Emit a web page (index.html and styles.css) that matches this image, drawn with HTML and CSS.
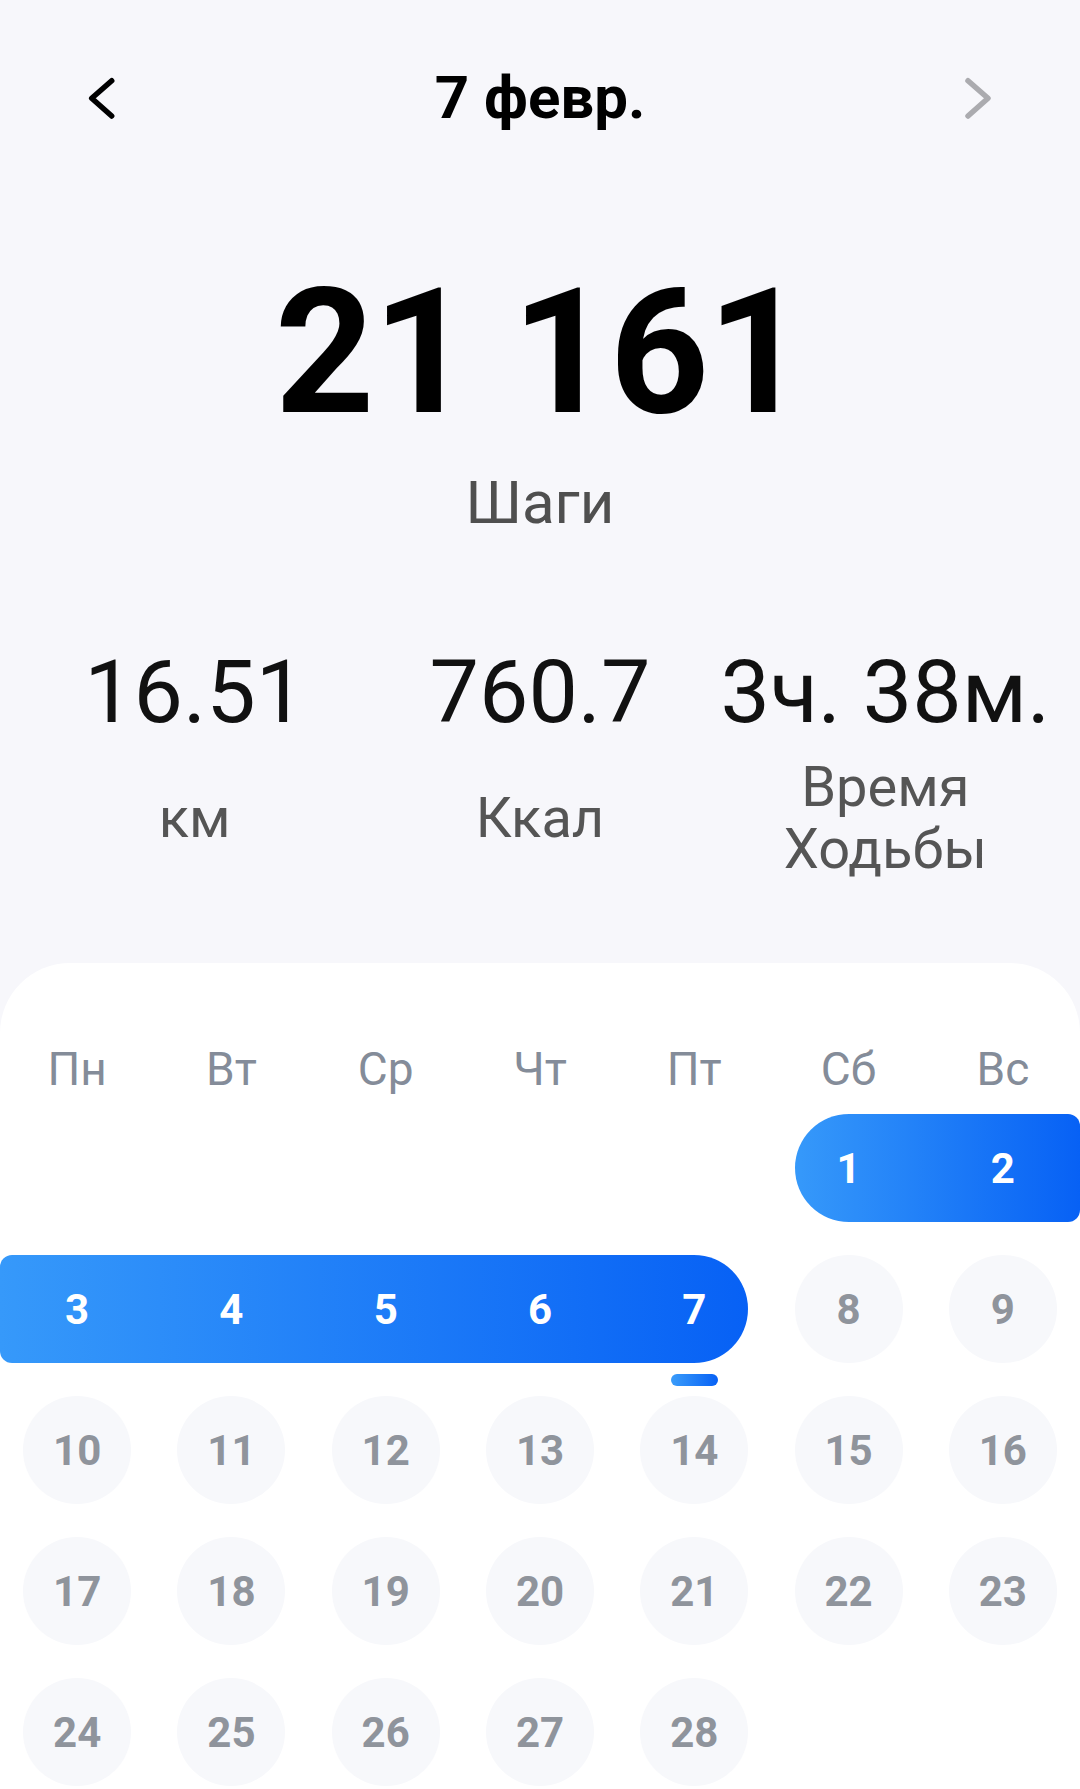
FILE: index.html
```html
<!DOCTYPE html>
<html lang="ru">
<head>
<meta charset="utf-8">
<title>Шаги</title>
<link rel="stylesheet" href="styles.css">
</head>
<body>
<div class="page">
  <header class="topbar">
    <svg class="chev" viewBox="0 0 34 48" width="34" height="48"><path d="M26.7 6.7 L6.7 24.3 L26.7 42" fill="none" stroke="#000" stroke-width="5.5" stroke-linecap="round" stroke-linejoin="round"/></svg>
    <div class="title">7 февр.</div>
    <svg class="chev" viewBox="0 0 34 48" width="34" height="48"><path d="M7 6.7 L27 24.3 L7 42" fill="none" stroke="#ababaf" stroke-width="5.5" stroke-linecap="round" stroke-linejoin="round"/></svg>
  </header>

  <section class="summary">
    <div class="steps">21 161</div>
    <div class="steps-label">Шаги</div>
  </section>

  <section class="stats">
    <div class="stat">
      <div class="stat-value">16.51</div>
      <div class="stat-label"><span>км</span></div>
    </div>
    <div class="stat">
      <div class="stat-value">760.7</div>
      <div class="stat-label"><span>Ккал</span></div>
    </div>
    <div class="stat">
      <div class="stat-value">3ч. 38м.</div>
      <div class="stat-label"><span>Время<br>Ходьбы</span></div>
    </div>
  </section>

  <section class="card">
    <div class="weekdays">
      <div>Пн</div><div>Вт</div><div>Ср</div><div>Чт</div><div>Пт</div><div>Сб</div><div>Вс</div>
    </div>
    <div class="month">
      <div class="spacer"></div><div class="spacer"></div><div class="spacer"></div><div class="spacer"></div><div class="spacer"></div>
      <div class="range range-start span2">
        <div class="rd">1</div><div class="rd">2</div>
      </div>
      <div class="range range-end span5">
        <div class="rd">3</div><div class="rd">4</div><div class="rd">5</div><div class="rd">6</div><div class="rd today">7</div>
      </div>
      <div class="day">8</div><div class="day">9</div>
      <div class="day">10</div><div class="day">11</div><div class="day">12</div><div class="day">13</div><div class="day">14</div><div class="day">15</div><div class="day">16</div>
      <div class="day">17</div><div class="day">18</div><div class="day">19</div><div class="day">20</div><div class="day">21</div><div class="day">22</div><div class="day">23</div>
      <div class="day">24</div><div class="day">25</div><div class="day">26</div><div class="day">27</div><div class="day">28</div>
    </div>
  </section>
</div>
</body>
</html>
```

FILE: styles.css
```css
* { box-sizing: border-box; }
html, body {
  margin: 0;
  padding: 0;
}
body {
  width: 1080px;
  height: 1789px;
  overflow: hidden;
  background: #f7f7fb;
  font-family: Roboto, "Noto Sans", "Liberation Sans", sans-serif;
  color: #000;
}
.page {
  width: 1080px;
  height: 1789px;
  display: flex;
  flex-direction: column;
}

/* header */
.topbar {
  height: 196px;
  padding: 0 85px;
  display: flex;
  align-items: center;
  justify-content: space-between;
}
.chev { display: block; }
.title {
  font-size: 60px;
  font-weight: 700;
  line-height: 60px;
}

/* summary */
.summary {
  display: flex;
  flex-direction: column;
  align-items: center;
}
.steps {
  margin-top: 70px;
  font-size: 174px;
  line-height: 174px;
  font-weight: 700;
  letter-spacing: -2px;
  color: #000;
}
.steps-label {
  margin-top: 33px;
  font-size: 60px;
  line-height: 60px;
  color: #4f4f4f;
}

/* stats */
.stats {
  margin-top: 115px;
  padding: 0 22px;
  display: grid;
  grid-template-columns: repeat(3, 1fr);
}
.stat {
  display: flex;
  flex-direction: column;
  align-items: center;
}
.stat-value {
  font-size: 88px;
  line-height: 88px;
  color: #111;
  white-space: nowrap;
}
.stat-label {
  margin-top: 20px;
  height: 124px;
  display: flex;
  align-items: center;
  justify-content: center;
  text-align: center;
  font-size: 56px;
  line-height: 62px;
  color: #555;
}

/* calendar card */
.card {
  margin-top: 83px;
  flex: 1;
  background: #fff;
  border-radius: 70px 70px 0 0;
  padding-top: 83px;
}
.weekdays {
  display: grid;
  grid-template-columns: repeat(7, 1fr);
  font-size: 46px;
  line-height: 46px;
  color: #848c99;
  text-align: center;
}
.month {
  margin-top: 22px;
  display: grid;
  grid-template-columns: repeat(7, 1fr);
  grid-auto-rows: 108px;
  row-gap: 33px;
}
.day {
  justify-self: center;
  width: 108px;
  height: 108px;
  border-radius: 50%;
  background: #f7f8fb;
  display: flex;
  align-items: center;
  justify-content: center;
  font-size: 42px;
  font-weight: 700;
  color: #8f949c;
}
.span2 { grid-column: span 2; }
.span5 { grid-column: span 5; }
.range {
  display: flex;
  gap: 46.2857px;
  background: linear-gradient(to right, #3699fa, #0761f5);
}
.range-start {
  margin-left: 23.1429px;
  border-radius: 54px 12px 12px 54px;
}
.range-end {
  padding-left: 23.1429px;
  margin-right: 23.1429px;
  border-radius: 12px 54px 54px 12px;
}
.rd {
  position: relative;
  flex: none;
  width: 108px;
  height: 108px;
  display: flex;
  align-items: center;
  justify-content: center;
  font-size: 42px;
  font-weight: 700;
  color: #fff;
}
.today::after {
  content: "";
  position: absolute;
  left: 50%;
  bottom: -23px;
  width: 47px;
  height: 12px;
  margin-left: -23.5px;
  border-radius: 6px;
  background: linear-gradient(to right, #3a9cfa, #0761f5);
}
```
